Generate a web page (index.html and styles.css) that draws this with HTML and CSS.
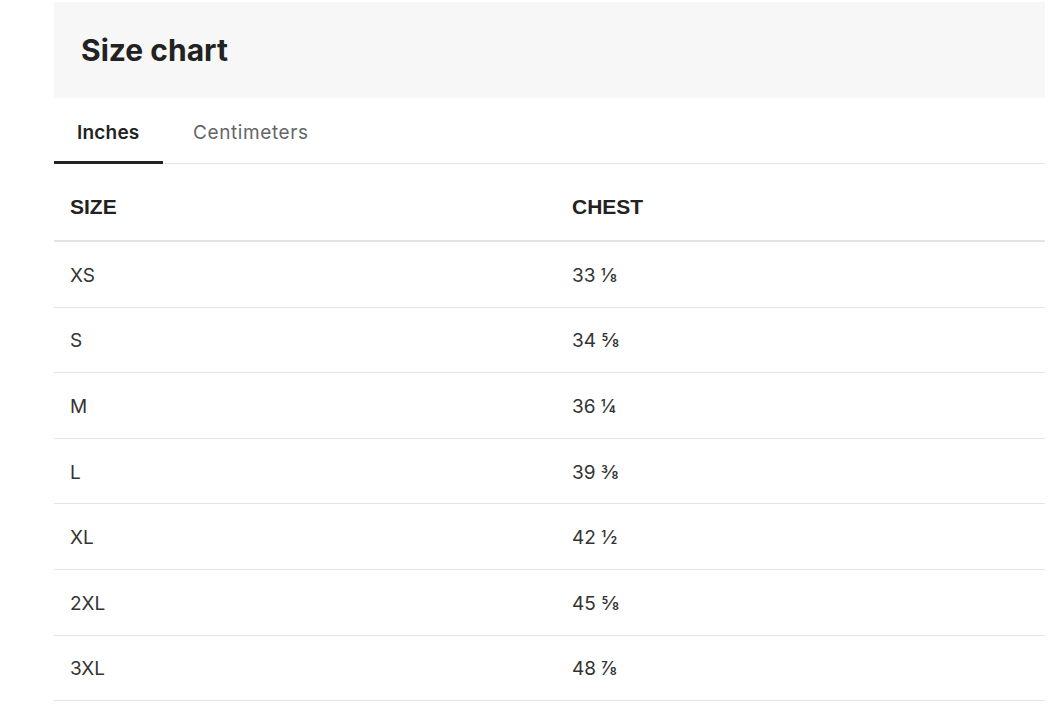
FILE: index.html
```html
<!DOCTYPE html>
<html lang="en">
<head>
<meta charset="utf-8">
<title>Size chart</title>
<link rel="stylesheet" href="styles.css">
</head>
<body>
<div class="panel">
  <header class="head">
    <h1 class="title">Size chart</h1>
  </header>
  <nav class="tabs">
    <span class="tab tab-active">Inches</span>
    <span class="tab tab-next">Centimeters</span>
  </nav>
  <table class="chart">
    <thead>
      <tr><th class="c1">SIZE</th><th>CHEST</th></tr>
    </thead>
    <tbody>
      <tr><td class="c1">XS</td><td>33 ⅛</td></tr>
      <tr><td class="c1">S</td><td>34 ⅝</td></tr>
      <tr><td class="c1">M</td><td>36 ¼</td></tr>
      <tr><td class="c1">L</td><td>39 ⅜</td></tr>
      <tr><td class="c1">XL</td><td>42 ½</td></tr>
      <tr><td class="c1">2XL</td><td>45 ⅝</td></tr>
      <tr><td class="c1">3XL</td><td>48 ⅞</td></tr>
    </tbody>
  </table>
</div>
</body>
</html>
```
FILE: styles.css
```css
html, body {
  margin: 0;
  padding: 0;
  background: #fff;
}
body {
  font-family: "Inter", "Liberation Sans", "DejaVu Sans", sans-serif;
  color: #333;
}
.panel {
  margin: 2px 13px 0 54px;
}
.head {
  background: #f7f7f7;
  height: 96px;
  display: flex;
  align-items: center;
  padding-left: 27px;
}
.title {
  margin: 0;
  font-size: 30px;
  font-weight: 700;
  color: #222;
}
.tabs {
  display: flex;
  border-bottom: 1px solid #e6e6e6;
  height: 65px;
}
.tab {
  display: flex;
  align-items: center;
  padding: 4px 0 0 23px;
  font-size: 19px;
  color: #666;
  letter-spacing: 0.2px;
}
.tab-active {
  width: 86px;
  font-weight: 600;
  color: #222;
  border-bottom: 3px solid #222;
  margin-bottom: -1px;
  padding-top: 5px;
}
.tab-next {
  padding-left: 30px;
  letter-spacing: 0.6px;
}
.chart {
  width: 100%;
  border-collapse: collapse;
}
.chart th {
  text-align: left;
  font-family: "Liberation Sans", Arial, sans-serif;
  font-weight: 700;
  font-size: 21px;
  color: #222;
  height: 77px;
  padding: 9px 0 0 16px;
  box-sizing: border-box;
  border-bottom: 2px solid #e4e4e4;
}
.chart td {
  font-size: 19px;
  color: #333;
  height: 62.6px;
  padding: 2px 0 0 16px;
  border-bottom: 1px solid #e6e6e6;
}
.chart .c1 {
  width: 486px;
}
```
